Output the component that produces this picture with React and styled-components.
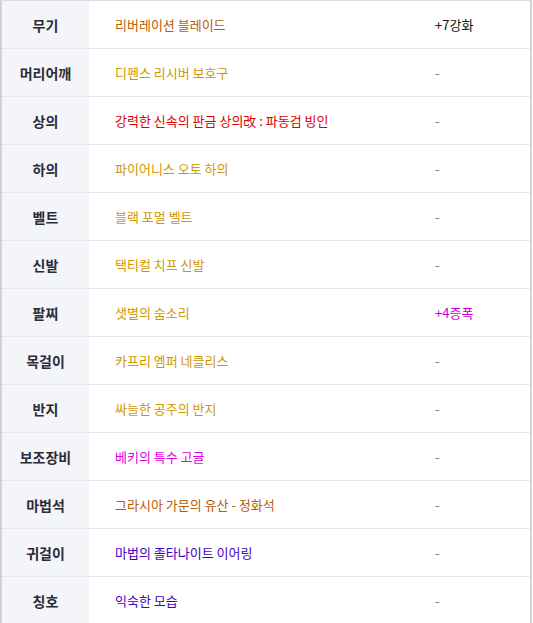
import React from "react";
import styled, { createGlobalStyle } from "styled-components";

const GlobalStyle = createGlobalStyle`
  html, body { margin: 0; padding: 0; background: #ffffff; }
  body { font-family: "Noto Sans CJK KR", "Noto Sans", sans-serif; }
`;

const COLORS = {
  unique: "#b85c00",
  legendary: "#d09800",
  red: "#dd0000",
  epic: "#e000e0",
  rare: "#4400cc",
  black: "#111111",
};

const items = [
  { slot: "무기", name: "리버레이션 블레이드", color: COLORS.unique, extra: "+7강화", extraColor: COLORS.black },
  { slot: "머리어깨", name: "디펜스 리시버 보호구", color: COLORS.legendary },
  { slot: "상의", name: "강력한 신속의 판금 상의改 : 파동검 빙인", color: COLORS.red },
  { slot: "하의", name: "파이어니스 오토 하의", color: COLORS.legendary },
  { slot: "벨트", name: "블랙 포멀 벨트", color: COLORS.legendary },
  { slot: "신발", name: "택티컬 치프 신발", color: COLORS.legendary },
  { slot: "팔찌", name: "샛별의 숨소리", color: COLORS.legendary, extra: "+4증폭", extraColor: "#cc00cc" },
  { slot: "목걸이", name: "카프리 엠퍼 네클리스", color: COLORS.legendary },
  { slot: "반지", name: "싸늘한 공주의 반지", color: COLORS.legendary },
  { slot: "보조장비", name: "베키의 특수 고글", color: COLORS.epic },
  { slot: "마법석", name: "그라시아 가문의 유산 - 정화석", color: COLORS.unique },
  { slot: "귀걸이", name: "마법의 졸타나이트 이어링", color: COLORS.rare },
  { slot: "칭호", name: "익숙한 모습", color: COLORS.rare },
];

export default function App() {
  return (
    <>
      <GlobalStyle />
      <Table>
        {items.map((item) => (
          <Row key={item.slot}>
            <Slot>{item.slot}</Slot>
            <Name $color={item.color}>{item.name}</Name>
            <Extra $color={item.extraColor}>{item.extra || "-"}</Extra>
          </Row>
        ))}
      </Table>
    </>
  );
}

const Table = styled.div`
  width: 528px;
  border-top: 1px solid #dcdde3;
  border-left: 2px solid #cfd1da;
  border-right: 2px solid #d2d2d6;
  display: flex;
  flex-direction: column;
`;

const Row = styled.div`
  display: grid;
  grid-template-columns: 87px 346px 1fr;
  height: 47px;
  border-bottom: 1px solid #e6e6ea;
  font-size: 13px;
  align-items: stretch;
`;

const Slot = styled.div`
  background: #f4f5f9;
  display: flex;
  align-items: center;
  justify-content: center;
  font-size: 14px;
  font-weight: 700;
  color: #2b2b38;
`;

const Name = styled.div`
  display: flex;
  align-items: center;
  padding-left: 26px;
  color: ${(p) => p.$color};
  white-space: nowrap;
`;

const Extra = styled.div`
  display: flex;
  align-items: center;
  color: ${(p) => p.$color || "#777777"};
  white-space: nowrap;
`;
